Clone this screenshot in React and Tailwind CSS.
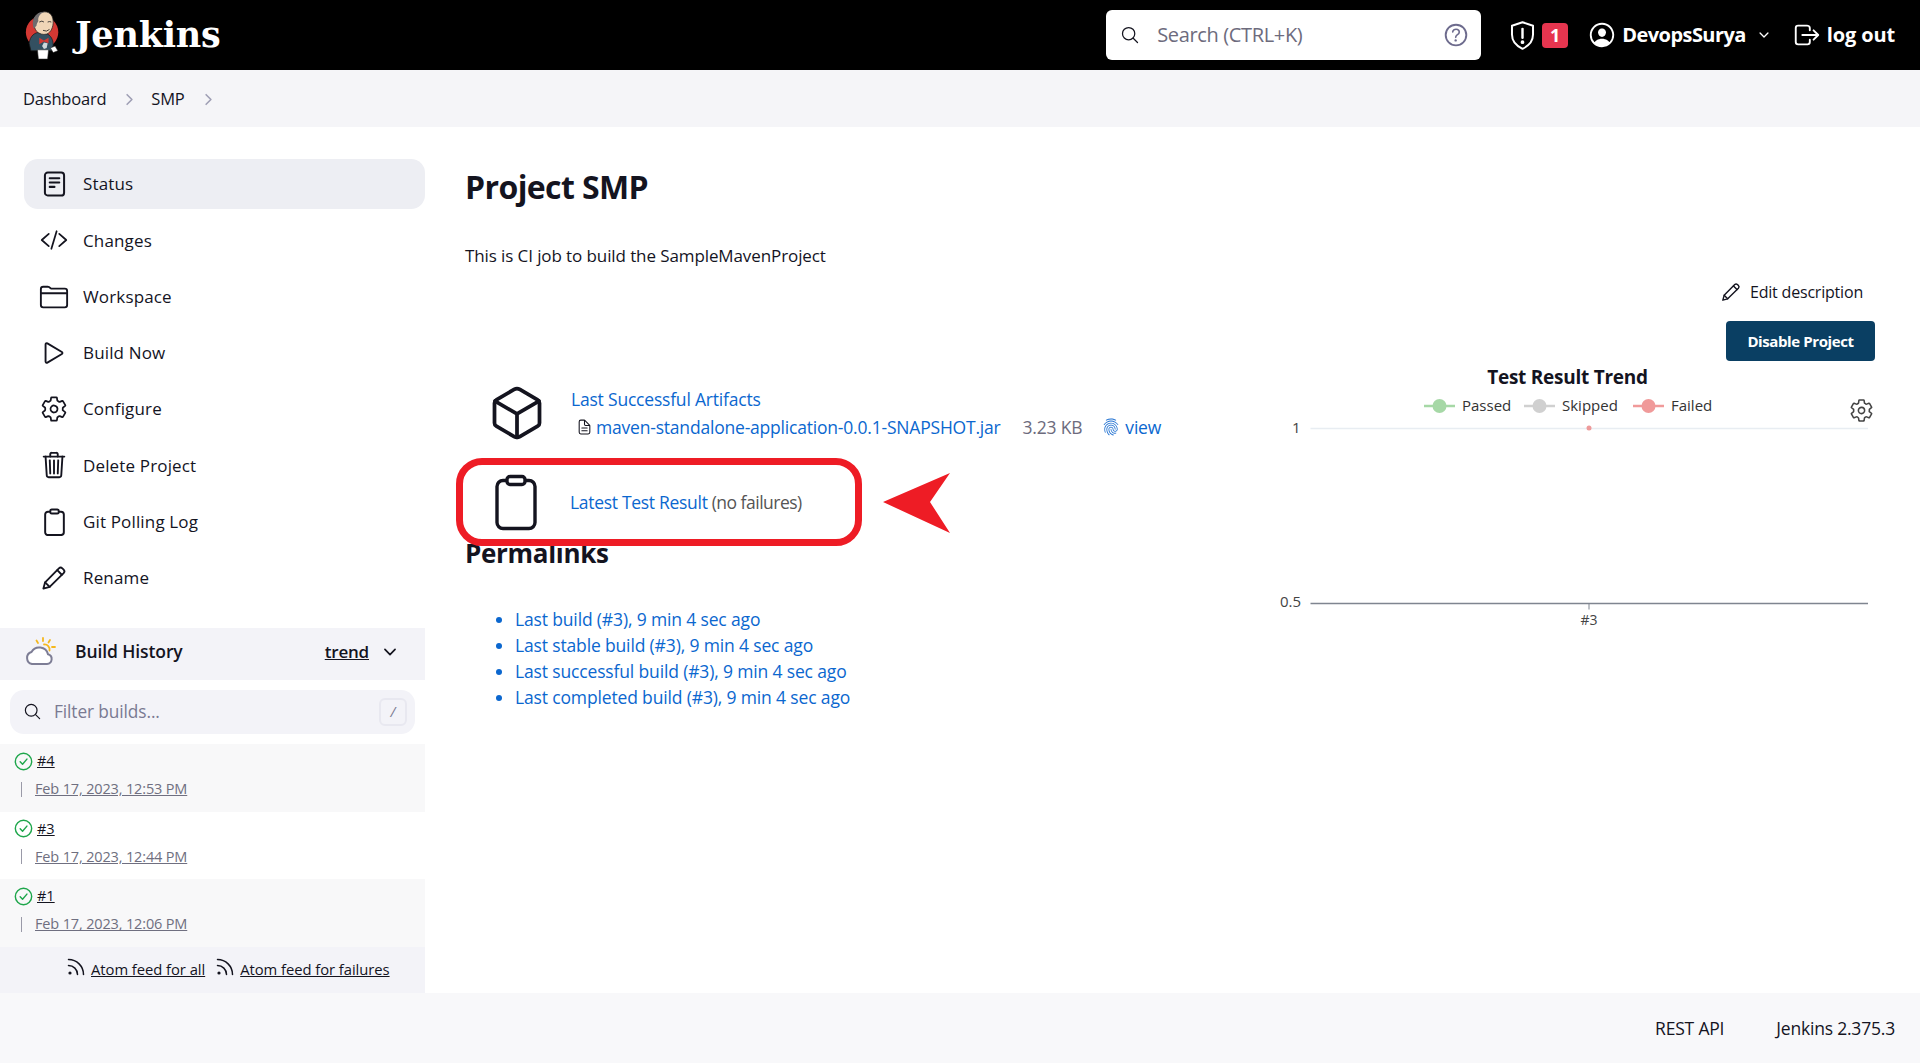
import React from "react";
import {
  IoCodeSlashOutline, IoFolderOutline, IoPlayOutline, IoSettingsOutline, IoTrashOutline,
  IoCubeOutline, IoSearchOutline, IoHelpCircleOutline, IoPersonCircleOutline,
  IoChevronDown, IoChevronForward, IoLogOutOutline, IoFingerPrintOutline, IoDocumentTextOutline,
} from "react-icons/io5";

const Pencil = ({ className }) => (
  <svg viewBox="0 0 24 24" className={className} fill="none" stroke="currentColor" strokeWidth="1.7" strokeLinejoin="round" strokeLinecap="round">
    <path d="M2.200 21.800l1.600-5.800L16.500 3.100a2.300 2.300 0 0 1 3.200 0l1.200 1.200a2.300 2.300 0 0 1 0 3.200L8 20.200z" />
    <path d="M15 4.800l4.200 4.200M3.800 16l4.200 4.200" />
  </svg>
);
const Clip = ({ className }) => (
  <svg viewBox="0 0 42 56" className={className} fill="none" stroke="currentColor" strokeWidth="3.4" strokeLinejoin="round">
    <rect x="2" y="6" width="38" height="48" rx="6" />
    <rect x="12" y="2" width="18" height="8" rx="3" fill="#fff" />
  </svg>
);
const StatusIcon = () => (
  <svg viewBox="0 0 24 28" className="w-[23px] h-[28px]" fill="none" stroke="#14141f" strokeWidth="2.100" strokeLinecap="round">
    <rect x="2" y="2" width="20" height="24" rx="3" />
    <path d="M7 8h10M7 12.500h10M7 17h5" />
  </svg>
);
const SmallClip = () => (
  <svg viewBox="0 0 24 30" className="w-[23px] h-[28px]" fill="none" stroke="#14141f" strokeWidth="2.100" strokeLinejoin="round">
    <rect x="2" y="4" width="20" height="25" rx="3" />
    <rect x="7.500" y="1.500" width="9" height="4.500" rx="1.500" fill="#fff" />
  </svg>
);
const Check = () => (
  <svg viewBox="0 0 20 20" className="w-[19px] h-[19px] shrink-0" fill="none" stroke="#1ea64b" strokeWidth="1.500" strokeLinecap="round" strokeLinejoin="round">
    <circle cx="10" cy="10" r="8.600" />
    <path d="M6.500 10.300l2.500 2.600 4.600-5.400" />
  </svg>
);
const Rss = () => (
  <svg viewBox="0 0 18 18" className="w-[18px] h-[18px]" fill="none" stroke="#14141f" strokeWidth="1.500" strokeLinecap="round">
    <circle cx="3" cy="15" r="1.600" fill="#14141f" stroke="none" />
    <path d="M1.500 7.500a9 9 0 0 1 9 9" />
    <path d="M1.500 1.500a15 15 0 0 1 15 15" />
  </svg>
);
const Shield = () => (
  <svg viewBox="0 0 24 28" className="w-[27px] h-[31px]" fill="none" stroke="#fff" strokeWidth="1.800" strokeLinecap="round" strokeLinejoin="round">
    <path d="M12 2l9.500 3.200v8c0 6.500-4.600 10.600-9.500 12.800C7.100 23.800 2.500 19.700 2.500 13.200v-8z" />
    <path d="M12 8v8" strokeWidth="2.200" />
    <circle cx="12" cy="20" r="0.800" fill="#fff" />
  </svg>
);
const Weather = () => (
  <svg viewBox="0 0 32 30" className="w-[32px] h-[30px]" fill="none" strokeLinecap="round">
    <g stroke="#f5b81e" strokeWidth="1.800">
      <path d="M20 7.500a5 5 0 0 1 5.500 6M19 1v3M12.500 3.500l1.500 2.500M26 3l-1.500 2.500M28 10h3" />
    </g>
    <path d="M8 27h15a5 5 0 0 0 1-9.800 9 9 0 0 0-16.500-2.200A6.200 6.200 0 0 0 8 27z" stroke="#7d7d95" strokeWidth="2" fill="#fff" />
  </svg>
);
const Logo = () => (
  <svg viewBox="0 0 40 54" className="w-[38px] h-[50px]">
    <circle cx="19" cy="24" r="17.500" fill="#d33833" />
    <path d="M5 36c1-8 6-12 12-12l8 2c5 3 6 8 6 12l-2 6H7z" fill="#335061" stroke="#1a1a1a" strokeWidth="0.800" />
    <path d="M10 13c0-7 6-11 12-11 6 0 9 5 9 11 0 5-2 11-7 13-4 1-8 0-11-3-2-3-3-6-3-10z" fill="#f0d6b7" stroke="#222" strokeWidth="0.800" />
    <path d="M10 20c-2-6-1-12 3-15 2-2 5-3 9-3-4 1-8 5-7 10-1 2-2 3-2 5z" fill="#6d6b6d" />
    <path d="M16 13q3-2 5 0M25 13q2-1 4 0M20 22q4 2 7-1" stroke="#222" strokeWidth="0.900" fill="none" />
    <path d="M16 30l5 3 5-3v6l-5-2-5 3z" fill="#d33833" />
    <path d="M21 35l4 1-1 5-3 1-2-3z" fill="#cfd8dc" />
    <path d="M14 43h12l-1 10H15z" fill="#fff" stroke="#222" strokeWidth="0.600" />
    <path d="M28 41l5-2 3 5-5 2z" fill="#fff" stroke="#222" strokeWidth="0.600" />
  </svg>
);

const nav = [
  ["Status", <StatusIcon />],
  ["Changes", <IoCodeSlashOutline className="w-[28px] h-[28px]" />],
  ["Workspace", <IoFolderOutline className="w-[30px] h-[30px]" />],
  ["Build Now", <IoPlayOutline className="w-[30px] h-[30px]" />],
  ["Configure", <IoSettingsOutline className="w-[28px] h-[28px]" />],
  ["Delete Project", <IoTrashOutline className="w-[30px] h-[30px]" />],
  ["Git Polling Log", <SmallClip />],
  ["Rename", <Pencil className="w-[26px] h-[26px]" />],
];
const builds = [
  ["#4", "Feb 17, 2023, 12:53 PM", "bg-[#f8f8f9]"],
  ["#3", "Feb 17, 2023, 12:44 PM", "bg-white"],
  ["#1", "Feb 17, 2023, 12:06 PM", "bg-[#f8f8f9]"],
];
const perma = [
  "Last build (#3), 9 min 4 sec ago",
  "Last stable build (#3), 9 min 4 sec ago",
  "Last successful build (#3), 9 min 4 sec ago",
  "Last completed build (#3), 9 min 4 sec ago",
];

const Chart = () => (
  <svg viewBox="0 0 620 300" className="w-[620px] h-[300px]" fontFamily="'Open Sans', sans-serif">
    <text x="307.500" y="23" textAnchor="middle" fontSize="19" fontWeight="700" letterSpacing="-0.25" fill="#14141f">Test Result Trend</text>
    <g fontSize="15" fill="#333">
      <path d="M164 45h31" stroke="#a6d8a6" strokeWidth="2.500" /><circle cx="179.500" cy="45" r="7" fill="#a6d8a6" />
      <text x="202" y="50">Passed</text>
      <path d="M264 45h31" stroke="#d0d0d0" strokeWidth="2.500" /><circle cx="279.500" cy="45" r="7" fill="#d0d0d0" />
      <text x="302" y="50">Skipped</text>
      <path d="M373 45h31" stroke="#f09a9a" strokeWidth="2.500" /><circle cx="388.500" cy="45" r="7" fill="#f09a9a" />
      <text x="411" y="50">Failed</text>
    </g>
    <g fontSize="15" fill="#444">
      <text x="32" y="72">1</text>
      <text x="20" y="246">0.5</text>
      <text x="329" y="264" textAnchor="middle" fontSize="14">#3</text>
    </g>
    <path d="M50.500 67.500H608" stroke="#e8edf2" strokeWidth="1.500" />
    <circle cx="329" cy="67" r="2.500" fill="#ee9a9a" />
    <path d="M50.500 242.500H608" stroke="#7f8590" strokeWidth="1.500" />
    <path d="M329 242.500v6" stroke="#7f8590" />
  </svg>
);

export default function App() {
  return (
    <div className="relative flex flex-col h-[1063px] overflow-hidden bg-white text-[#14141f] font-['Open_Sans',sans-serif]">
      <header className="flex items-center h-[70px] bg-black text-white shrink-0">
        <div className="ml-[24px]"><Logo /></div>
        <span className="ml-[13px] font-['DejaVu_Serif',serif] font-bold text-[35px] tracking-[-0.2px]">Jenkins</span>
        <div className="ml-auto flex items-center">
          <div className="flex items-center w-[375px] h-[50px] bg-white rounded-[6px] pl-[14px] pr-[10px] text-[#6d6b7d]">
            <IoSearchOutline className="w-[20px] h-[20px] text-[#14141f]" />
            <span className="ml-[17px] text-[20px] tracking-[-0.35px]">Search (CTRL+K)</span>
            <IoHelpCircleOutline className="ml-auto w-[30px] h-[30px] text-[#6d6b8d]" />
          </div>
          <div className="ml-[28px]"><Shield /></div>
          <span className="ml-[6px] flex items-center justify-center w-[26px] h-[25px] rounded-[4px] bg-[#e6354f] font-bold text-[18px]">1</span>
          <IoPersonCircleOutline className="ml-[19px] w-[30px] h-[30px]" />
          <span className="ml-[5px] font-bold text-[20px] tracking-[-0.55px]">DevopsSurya</span>
          <IoChevronDown className="ml-[11px] w-[14px] h-[14px]" />
          <IoLogOutOutline className="ml-[21px] w-[30px] h-[30px]" />
          <span className="ml-[5px] mr-[25px] font-bold text-[20px] tracking-[-0.15px]">log out</span>
        </div>
      </header>

      <nav className="flex items-center h-[57px] shrink-0 bg-[#f5f5f8] pl-[23px] pt-[1px] text-[16.500px] tracking-[-0.2px]">
        <span>Dashboard</span>
        <IoChevronForward className="ml-[15px] w-[17px] h-[17px] text-[#9f9fb5]" />
        <span className="ml-[13px]">SMP</span>
        <IoChevronForward className="ml-[15px] w-[17px] h-[17px] text-[#9f9fb5]" />
      </nav>

      <main className="flex flex-1 min-h-0">
        <aside className="w-[425px] shrink-0 pt-[32px] flex flex-col">
          <ul className="flex flex-col gap-[6.300px] pl-[24px] text-[17px] tracking-[0.15px]">
            {nav.map(([label, icon], i) => (
              <li key={label} className={`flex items-center h-[50px] rounded-[14px] ${i === 0 ? "bg-[#edeef3]" : ""}`}>
                <span className="flex items-center justify-center w-[60px]">{icon}</span>
                <span className="ml-[-1px]">{label}</span>
              </li>
            ))}
          </ul>
          <div className="mt-[25px] flex items-center h-[52px] bg-[#f3f3f8] pl-[24px] pr-[26px] pb-[5px]">
            <Weather />
            <span className="ml-[19px] font-semibold text-[17.500px] tracking-[-0.1px]">Build History</span>
            <span className="ml-auto font-semibold underline text-[17px] tracking-[-0.2px]">trend</span>
            <IoChevronDown className="ml-[12px] w-[18px] h-[18px]" />
          </div>
          <div className="mt-[10px] mx-[10px] flex items-center h-[44px] rounded-[14px] bg-[#f3f3f8] pl-[13px] pr-[8px] pb-[1px]">
            <IoSearchOutline className="w-[19px] h-[19px]" />
            <span className="ml-[12px] text-[#7a7a92] text-[17.300px] tracking-[-0.1px] font-medium">Filter builds...</span>
            <span className="ml-auto flex items-center justify-center w-[28px] h-[28px] rounded-[6px] border-2 border-[#e8e8f0] text-[#7a7a92] text-[14px] italic">/</span>
          </div>
          <div className="mt-[10px] flex flex-col">
            {builds.map(([n, d, cls]) => (
              <div key={n} className={`${cls} h-[67.600px] pl-[14px] pt-[7px]`}>
                <div className="flex items-center gap-[4px] h-[20px]">
                  <Check />
                  <span className="underline text-[14.500px]">{n}</span>
                </div>
                <div className="mt-[9px] flex items-center h-[18px]">
                  <span className="ml-[7px] w-px h-[15px] bg-[#9a9aa8]" />
                  <span className="ml-[13px] underline text-[14.500px] tracking-[-0.15px] text-[#6f6f80]">{d}</span>
                </div>
              </div>
            ))}
          </div>
          <div className="flex-1 bg-[#f3f3f8] flex items-start pt-[11px] pl-[67px] text-[14.800px] tracking-[-0.05px]">
            <Rss />
            <span className="ml-[6px] underline">Atom feed for all</span>
            <span className="ml-[11px]"><Rss /></span>
            <span className="ml-[6px] underline">Atom feed for failures</span>
          </div>
        </aside>

        <section className="flex-1 min-w-0 flex pl-[40px] pr-[45px]">
          <div className="flex-1 min-w-0">
            <h1 className="mt-[40px] h-[40px] leading-[40px] text-[32px] font-bold tracking-[-0.6px]">Project SMP</h1>
            <p className="mt-[37px] h-[24px] leading-[24px] text-[17px] tracking-[-0.1px]">This is CI job to build the SampleMavenProject</p>
            <div className="mt-[117px] flex items-center h-[56px] pl-[22px]">
              <IoCubeOutline className="w-[60px] h-[62px]" />
              <div className="ml-[24px] text-[17.500px] tracking-[-0.2px] text-[#0b67cf] font-medium">
                <div className="h-[28px] leading-[28px]">Last Successful Artifacts</div>
                <div className="flex items-center h-[28px]">
                  <IoDocumentTextOutline className="ml-[5px] w-[17px] h-[20px] text-[#14141f]" />
                  <span className="ml-[3px]">maven-standalone-application-0.0.1-SNAPSHOT.jar</span>
                  <span className="ml-[22px] font-normal text-[#6d6b7d]">3.23 KB</span>
                  <IoFingerPrintOutline className="ml-[20px] w-[18px] h-[20px] text-[#1d6fd0]" />
                  <span className="ml-[5px]">view</span>
                </div>
              </div>
            </div>
            <div className="mt-[33px] flex items-center h-[56px] pl-[30px]">
              <Clip className="w-[42px] h-[57px]" />
              <div className="ml-[33px] text-[17.500px] tracking-[-0.3px]">
                <span className="text-[#0b67cf] font-medium">Latest Test Result</span>
                <span className="text-[#555] tracking-[-0.5px]"> (no failures)</span>
              </div>
            </div>
            <h2 className="mt-[5px] h-[36px] leading-[36px] text-[26px] font-bold tracking-[-0.3px]">Permalinks</h2>
            <ul className="mt-[35px] pl-[50px] list-disc text-[17.500px] tracking-[-0.15px] text-[#0b67cf] font-medium">
              {perma.map((p) => <li key={p} className="h-[26.100px] leading-[26.100px] marker:text-[#0b67cf]">{p}</li>)}
            </ul>
          </div>
          <div className="w-[620px] shrink-0 flex flex-col items-end">
            <div className="mt-[151px] mr-[12px] flex items-center h-[28px] text-[16px] tracking-[-0.2px]">
              <Pencil className="w-[20px] h-[20px]" />
              <span className="ml-[9px]">Edit description</span>
            </div>
            <button className="mt-[15px] w-[149px] h-[40px] rounded-[4px] bg-[#0a3f63] text-white font-bold text-[15px] tracking-[-0.4px]">Disable Project</button>
            <div className="relative mr-[-5px]">
              <Chart />
              <IoSettingsOutline className="absolute right-[6px] top-[37px] w-[25px] h-[25px] text-[#444]" />
            </div>
          </div>
        </section>
      </main>

      <footer className="flex items-center justify-end h-[70px] shrink-0 bg-[#f8f8fa] pr-[25px] text-[17.500px] tracking-[-0.2px]">
        <span>REST API</span>
        <span className="ml-[52px]">Jenkins 2.375.3</span>
      </footer>

      <div className="absolute left-[456px] top-[458px] w-[406px] h-[88px] rounded-[26px] border-[7px] border-[#ee1c25]" />
      <svg viewBox="0 0 68 60" className="absolute left-[883px] top-[473px] w-[68px] h-[60px]">
        <path d="M0 29L67 0 L47 29 L67 60Z" fill="#ee1c25" />
      </svg>
    </div>
  );
}
